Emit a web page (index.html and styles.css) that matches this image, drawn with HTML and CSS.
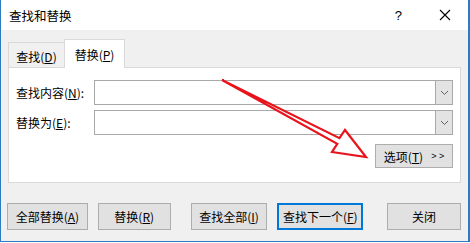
FILE: index.html
```html
<!DOCTYPE html>
<html>
<head>
<meta charset="utf-8">
<link rel="stylesheet" href="styles.css">
</head>
<body>
<div class="window">
  <div class="titlebar">
    <span class="title">查找和替换</span>
    <span class="help">?</span>
    <svg class="close" width="12" height="12" viewBox="0 0 12 12"><path d="M1 1 L11 11 M11 1 L1 11" stroke="#000" stroke-width="1.1" fill="none"/></svg>
  </div>
  <div class="content">
    <div class="tabs">
      <div class="tab">查找(<u>D</u>)</div>
      <div class="tab active">替换(<u>P</u>)</div>
    </div>
    <div class="panel">
      <div class="row">
        <span class="label">查找内容(<u>N</u>):</span>
        <div class="combo">
          <div class="field"></div>
          <div class="drop"><svg width="9" height="6" viewBox="0 0 9 6"><path d="M1 1 L4.5 4.5 L8 1" stroke="#606060" stroke-width="1" fill="none"/></svg></div>
        </div>
      </div>
      <div class="row">
        <span class="label">替换为(<u>E</u>):</span>
        <div class="combo">
          <div class="field"></div>
          <div class="drop"><svg width="9" height="6" viewBox="0 0 9 6"><path d="M1 1 L4.5 4.5 L8 1" stroke="#606060" stroke-width="1" fill="none"/></svg></div>
        </div>
      </div>
      <div class="opts-row">
        <div class="btn opts">选项(<u>T</u>)<span class="gt">&gt; &gt;</span></div>
      </div>
    </div>
    <div class="buttons">
      <div class="btn b-all">全部替换(<u>A</u>)</div>
      <div class="btn b-rep">替换(<u>R</u>)</div>
      <div class="btn b-findall">查找全部(<u>I</u>)</div>
      <div class="btn b-next">查找下一个(<u>F</u>)</div>
      <div class="btn b-close">关闭</div>
    </div>
  </div>
  <svg class="arrow" width="470" height="243" viewBox="0 0 470 243">
    <path d="M222 80 L339.5 138.2 L345 130 L366 157 L332 152 L337.3 143.8 Z" fill="#fff" stroke="#e8141c" stroke-width="2.2" stroke-linejoin="miter"/>
  </svg>
</div>
</body>
</html>
```

FILE: styles.css
```css
* { box-sizing: border-box; }
html, body { margin: 0; padding: 0; }
body {
  width: 470px;
  height: 243px;
  background: #ffffff;
  font-family: "Noto Sans CJK SC", "Noto Sans", sans-serif;
  font-size: 12px;
  color: #000;
  overflow: hidden;
}
u { text-decoration: underline; text-underline-offset: 1px; }
.window {
  position: relative;
  width: 470px;
  height: 242px;
  border-left: 1px solid #2b7cc4;
  border-right: 2px solid #2b7cc4;
  border-bottom: 1px solid #2b7cc4;
  background: #f0f0f0;
  display: flex;
  flex-direction: column;
}
.titlebar {
  height: 30px;
  background: #fff;
  display: flex;
  align-items: center;
  padding-left: 8px;
  flex-shrink: 0;
}
.title { font-size: 12.5px; flex: 1; }
.help { font-size: 13px; font-family: "Liberation Sans", sans-serif; margin-right: 37px; margin-top: 1px; }
.close { margin-right: 17px; }
.content {
  padding: 9px 7px 0 7px;
}
.tabs {
  display: flex;
  align-items: flex-end;
  height: 28px;
  position: relative;
  z-index: 1;
}
.tab {
  height: 25px;
  width: 56px;
  border: 1px solid #d9d9d9;
  border-bottom: none;
  border-right: none;
  background: #f0f0f0;
  display: flex;
  align-items: center;
  justify-content: center;
  padding-top: 2px;
}
.tab.active {
  height: 29px;
  width: 61px;
  background: #fff;
  border-right: 1px solid #d9d9d9;
  margin-bottom: -1px;
  padding-top: 0;
}
.panel {
  background: #fff;
  border: 1px solid #d9d9d9;
  height: 116px;
  padding: 12px 7px 0 7px;
}
.row {
  display: flex;
  align-items: center;
  height: 25px;
  margin-bottom: 5px;
}
.label { width: 78px; }
.combo {
  flex: 1;
  height: 25px;
  display: flex;
  border: 1px solid #a8a8a8;
  background: #fff;
}
.field { flex: 1; }
.drop {
  width: 17px;
  background: #e3e3e3;
  border-left: 1px solid #a8a8a8;
  display: flex;
  align-items: center;
  justify-content: center;
}
.opts-row {
  display: flex;
  justify-content: flex-end;
  margin-top: 9px;
}
.btn {
  background: #e1e1e1;
  border: 1px solid #adadad;
  display: flex;
  align-items: center;
  justify-content: center;
  height: 27px;
}
.opts { width: 78px; height: 24px; }
.gt { font-family: "Liberation Sans", sans-serif; font-size: 9px; margin-left: 8px; }
.buttons {
  display: flex;
  margin-top: 20px;
  margin-left: -1px;
}
.b-all { width: 81px; }
.b-rep { width: 73px; margin-left: 10px; }
.b-findall { width: 77px; margin-left: 20px; }
.b-next { width: 86px; margin-left: 10px; border: 2px solid #0078d7; }
.b-close { width: 74px; margin-left: 24px; }
.arrow {
  position: absolute;
  left: -1px;
  top: 0;
  pointer-events: none;
}
```
